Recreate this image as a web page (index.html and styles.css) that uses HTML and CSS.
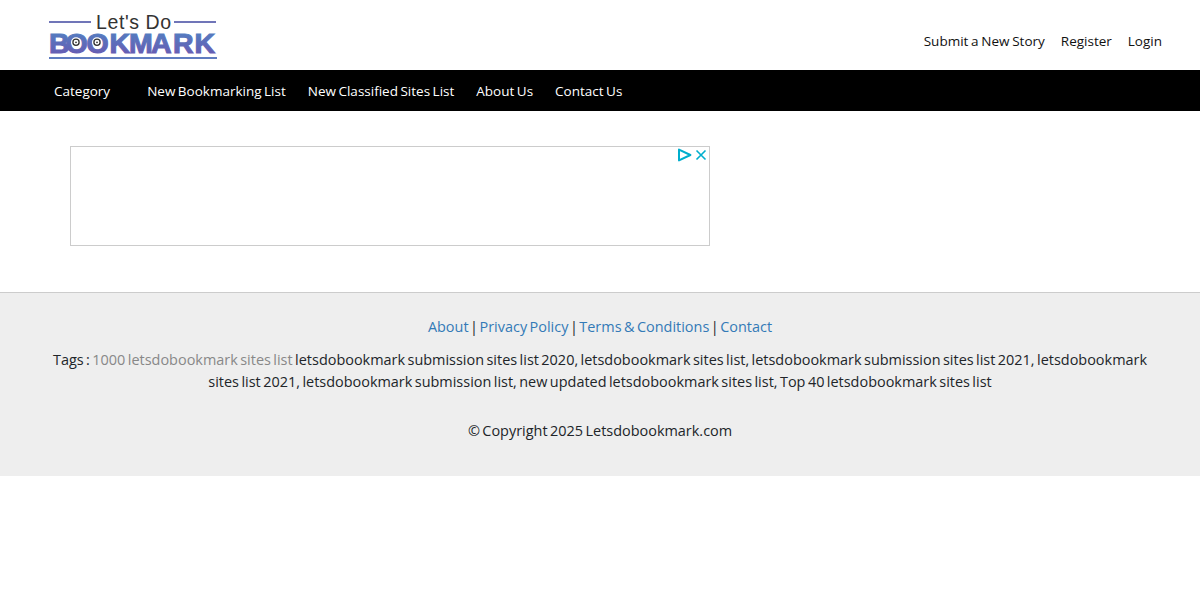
FILE: index.html
```html
<!DOCTYPE html>
<html lang="en">
<head>
  <meta charset="UTF-8" />
  <meta name="viewport" content="width=device-width, initial-scale=1.0"/>
  <title>Let's Do Bookmark</title>
  <link rel="stylesheet" href="styles.css">
</head>
<body>

<header class="top">
  <a class="logo" href="#" aria-label="Let's Do Bookmark">
    <svg width="170" height="48" viewBox="0 0 170 48">
      <defs>
        <linearGradient id="logoFill" x1="0" y1="0" x2="0" y2="1">
          <stop offset="0" stop-color="#4f86c4"/>
          <stop offset="1" stop-color="#6a55b0"/>
        </linearGradient>
      </defs>
      <rect x="0" y="7" width="42" height="2" fill="#7075b8"/>
      <rect x="125" y="7" width="42" height="2" fill="#7075b8"/>
      <text class="logo-small" x="47" y="14.5">Let's Do</text>
      <text class="logo-big" x="0 16.5 37.5 60.5 80 102 124 145.5" y="38.6" fill="url(#logoFill)" stroke="url(#logoFill)">BOOKMARK</text>
      <!-- eyes inside the two O's -->
      <circle cx="27" cy="28.3" r="5" fill="#fff"/>
      <circle cx="27" cy="28.3" r="3.1" fill="none" stroke="#333" stroke-width="1.3"/>
      <circle cx="27" cy="28.3" r="0.9" fill="#333"/>
      <circle cx="48" cy="28.3" r="5" fill="#fff"/>
      <circle cx="48" cy="28.3" r="3.1" fill="none" stroke="#333" stroke-width="1.3"/>
      <circle cx="48" cy="28.3" r="0.9" fill="#333"/>
      <rect x="0" y="43" width="168" height="2" fill="#5f7cc0"/>
    </svg>
  </a>
  <nav class="user-links">
    <a href="#">Submit a New Story</a>
    <a href="#">Register</a>
    <a href="#">Login</a>
  </nav>
</header>

<nav class="main-nav">
  <a class="cat" href="#">Category</a>
  <a href="#">New Bookmarking List</a>
  <a href="#">New Classified Sites List</a>
  <a href="#">About Us</a>
  <a href="#">Contact Us</a>
</nav>

<main class="content">
  <div class="ad">
    <div class="ad-icons">
      <svg width="15" height="14" viewBox="0 0 15 14"><path d="M2 1.6 L13.4 7 L2 12.4 Z" fill="none" stroke="#00aecd" stroke-width="2" stroke-linejoin="round"/></svg>
      <svg width="12" height="12" viewBox="0 0 12 12"><path d="M1.5 1.5 L10.5 10.5 M10.5 1.5 L1.5 10.5" stroke="#00aecd" stroke-width="1.6" fill="none"/></svg>
    </div>
  </div>
</main>

<footer class="foot">
  <p class="foot-links">
    <a href="#">About</a><span class="sep">|</span><a href="#">Privacy Policy</a><span class="sep">|</span><a href="#">Terms &amp; Conditions</a><span class="sep">|</span><a href="#">Contact</a>
  </p>
  <p class="tags">Tags : <span class="muted">1000 letsdobookmark sites list</span> letsdobookmark submission sites list 2020, letsdobookmark sites list, letsdobookmark submission sites list 2021, letsdobookmark sites list 2021, letsdobookmark submission list, new updated letsdobookmark sites list, Top 40 letsdobookmark sites list</p>
  <p class="copy">© Copyright 2025 Letsdobookmark.com</p>
</footer>

</body>
</html>
```
FILE: styles.css
```css
body { font-family: "Open Sans", "Noto Sans", sans-serif; background: #fff; color: #212529; margin: 0; padding: 0; }
a { text-decoration: none; }

.top { height: 70px; display: flex; justify-content: space-between; padding: 0 38px 0 49px; }
.logo { display: block; margin-top: 14px; }
.logo-small { font-family: "Liberation Sans", sans-serif; font-size: 19.5px; letter-spacing: 0.6px; fill: #333; }
.logo-big { font-family: "Liberation Sans", sans-serif; font-size: 28.5px; font-weight: bold; stroke-width: 1.1px; }
.user-links { display: flex; gap: 16px; padding-top: 31px; font-size: 13.5px; line-height: 20px; word-spacing: -0.8px; }
.user-links a { color: #111; }

.main-nav { height: 41px; background: #000; display: flex; align-items: center; padding-left: 54px; gap: 22px; font-size: 13.5px; word-spacing: -1px; }
.main-nav a { color: #fff; }
.main-nav .cat { margin-right: 15px; }

.content { padding: 35px 70px 46px; }
.ad { width: 638px; height: 98px; border: 1px solid #ccc; display: flex; justify-content: flex-end; }
.ad-icons { display: flex; gap: 3px; height: 14px; padding: 1px 2px 0 0; align-items: center; }

.foot { background: #eee; border-top: 1px solid #ccc; height: 183px; text-align: center; font-size: 14.45px; line-height: 22px; padding: 0 50px; word-spacing: -1.3px; }
.foot p { margin: 0; }
.foot-links { padding-top: 23px; }
.foot-links a { color: #337ab7; }
.sep { margin: 0 1.5px; }
.tags { padding-top: 11px; }
.muted { color: #888; }
.copy { padding-top: 27px; }
```
